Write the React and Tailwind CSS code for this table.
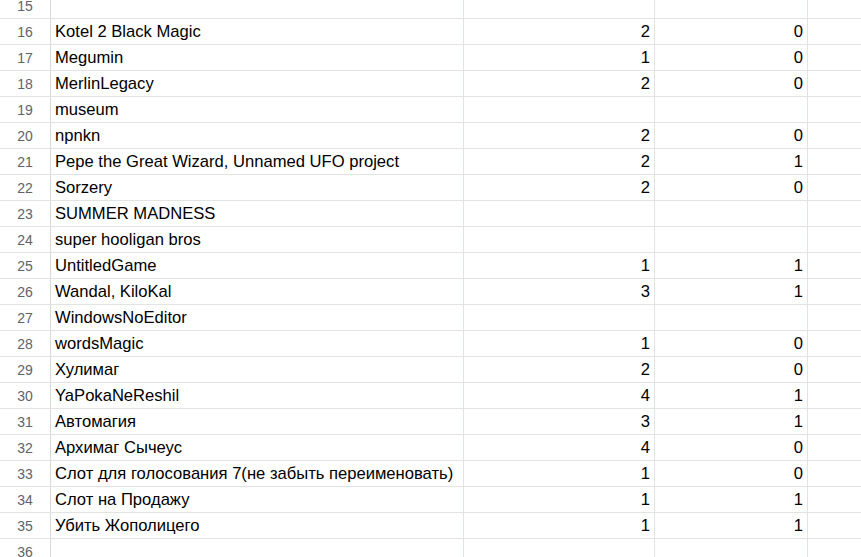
import React from "react";

const rows = [
  [15, "", "", ""],
  [16, "Kotel 2 Black Magic", "2", "0"],
  [17, "Megumin", "1", "0"],
  [18, "MerlinLegacy", "2", "0"],
  [19, "museum", "", ""],
  [20, "npnkn", "2", "0"],
  [21, "Pepe the Great Wizard, Unnamed UFO project", "2", "1"],
  [22, "Sorzery", "2", "0"],
  [23, "SUMMER MADNESS", "", ""],
  [24, "super hooligan bros", "", ""],
  [25, "UntitledGame", "1", "1"],
  [26, "Wandal, KiloKal", "3", "1"],
  [27, "WindowsNoEditor", "", ""],
  [28, "wordsMagic", "1", "0"],
  [29, "Хулимаг", "2", "0"],
  [30, "YaPokaNeReshil", "4", "1"],
  [31, "Автомагия", "3", "1"],
  [32, "Архимаг Сычеус", "4", "0"],
  [33, "Слот для голосования 7(не забыть переименовать)", "1", "0"],
  [34, "Слот на Продажу", "1", "1"],
  [35, "Убить Жополицего", "1", "1"],
  [36, "", "", ""],
];

export default function App() {
  return (
    <div
      className="w-[861px] h-[557px] overflow-hidden bg-white"
      style={{ fontFamily: '"Liberation Sans", Arial, sans-serif' }}
    >
      <div className="-mt-[7px] flex flex-col">
        {rows.map(([n, name, a, b]) => (
          <div key={n} className="flex h-[26px] shrink-0 border-b border-[#e2e3e3]">
            <div className="w-[51px] shrink-0 border-r border-[#d6d8d9] flex items-center justify-center pt-[2px] text-[14px] text-[#5f6368]">
              {n}
            </div>
            <div className="w-[413px] shrink-0 border-r border-[#e2e3e3] flex items-center pt-[2px] pl-[4px] text-[16.6px] text-black whitespace-nowrap overflow-hidden">
              {name}
            </div>
            <div className="w-[191px] shrink-0 border-r border-[#e2e3e3] flex items-center justify-end pt-[2px] pr-[4px] text-[16.6px] text-black">
              {a}
            </div>
            <div className="w-[153px] shrink-0 border-r border-[#e2e3e3] flex items-center justify-end pt-[2px] pr-[4px] text-[16.6px] text-black">
              {b}
            </div>
            <div className="flex-1" />
          </div>
        ))}
      </div>
    </div>
  );
}
